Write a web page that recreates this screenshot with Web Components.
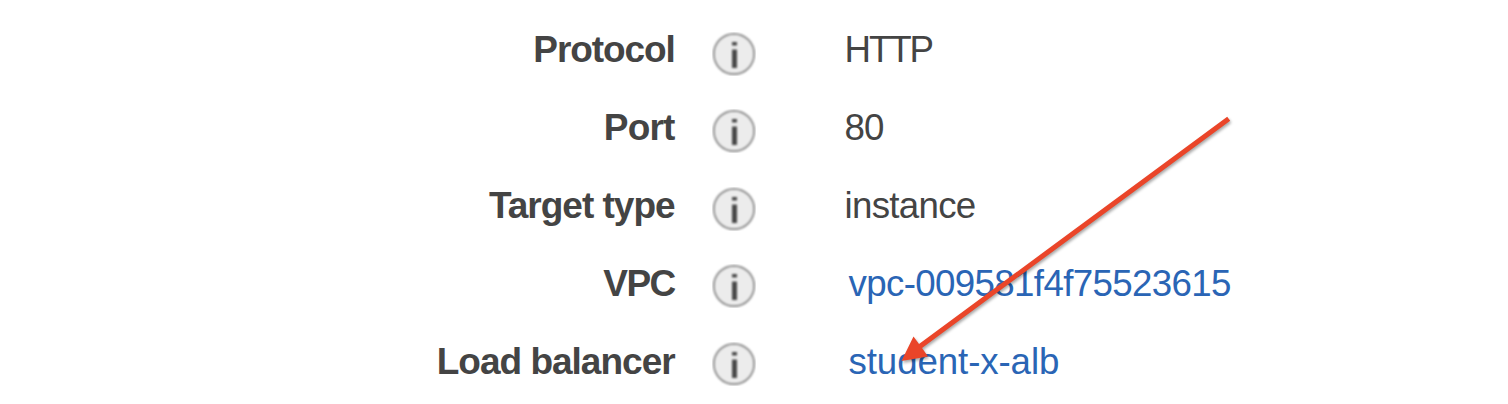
<!DOCTYPE html>
<html lang="en">
<head>
<meta charset="utf-8">
<title>Target group details</title>
<style>
body{margin:0;background:#fff;overflow:hidden}
</style>
</head>
<body>
<detail-panel>
<detail-row label="Protocol" style="--ls:-1.1px;--vs:-2.1px"><span>HTTP</span></detail-row>
<detail-row label="Port" style="--dy:-1px;--ls:-.8px;--vs:-1px"><span>80</span></detail-row>
<detail-row label="Target type" style="--dy:-1px;--ls:-1px;--vs:-.7px"><span>instance</span></detail-row>
<detail-row label="VPC" link style="--dy:-2px;--ls:-1.6px;--vs:-.64px"><span>vpc-009581f4f75523615</span></detail-row>
<detail-row label="Load balancer" link style="--dy:-2px;--ls:-1px;--vs:-.1px"><span>student-x-alb</span></detail-row>
</detail-panel>
<script>
customElements.define('info-icon', class extends HTMLElement {
  constructor(){
    super();
    this.attachShadow({mode:'open'}).innerHTML = `
<style>:host{display:block;width:44px;height:44px}svg{display:block}</style>
<svg width="44" height="44" viewBox="0 0 44 44">
<g style="filter:blur(.8px)">
<circle cx="22" cy="22" r="20.2" fill="#ececec" stroke="#858585" stroke-width="1.7"/>
<path d="M20 10h5v3.6h-5zM20 17.6h5v18.4h-5z" fill="#484848"/>
</g></svg>`;
  }
});
customElements.define('detail-row', class extends HTMLElement {
  connectedCallback(){
    const root = this.attachShadow({mode:'open'});
    root.innerHTML = `
<style>
:host{display:grid;grid-template-columns:675px 37px 44px 88.5px 1fr;height:78px;line-height:78px;color:#444}
:host([link]) .value{color:#2a65b5;padding-left:4px}
.label{font-weight:700;text-align:right;white-space:nowrap;padding-right:.4px}
.label span{letter-spacing:var(--ls,0px)}
info-icon{grid-column:3;margin-top:calc(21px + var(--dy,0px))}
.value{grid-column:5;font-size:36.7px;white-space:nowrap;letter-spacing:var(--vs,0px)}
</style>
<div class="label"><span></span></div><info-icon></info-icon><div class="value"><slot></slot></div>`;
    root.querySelector('.label span').textContent = this.getAttribute('label');
  }
});
customElements.define('pointer-arrow', class extends HTMLElement {
  constructor(){
    super();
    this.attachShadow({mode:'open'}).innerHTML = `
<style>:host{position:absolute;inset:0;pointer-events:none}svg{display:block;filter:drop-shadow(1px 2.5px 1.5px rgba(0,0,0,.35))}</style>
<svg width="1508" height="404" viewBox="0 0 1508 404">
<path d="M1227.2 116.8L1230.2 120.8L922 348L928 356.5L901.5 361L913.5 336.5L919 344Z" fill="#ea4529"/>
</svg>`;
  }
});
customElements.define('detail-panel', class extends HTMLElement {
  constructor(){
    super();
    this.attachShadow({mode:'open'}).innerHTML = `
<style>:host{display:block;position:relative;box-sizing:border-box;height:404px;padding-top:11px;overflow:hidden;font:37px "Liberation Sans",Arial,sans-serif}</style>
<slot></slot><pointer-arrow></pointer-arrow>`;
  }
});
</script>
</body>
</html>
